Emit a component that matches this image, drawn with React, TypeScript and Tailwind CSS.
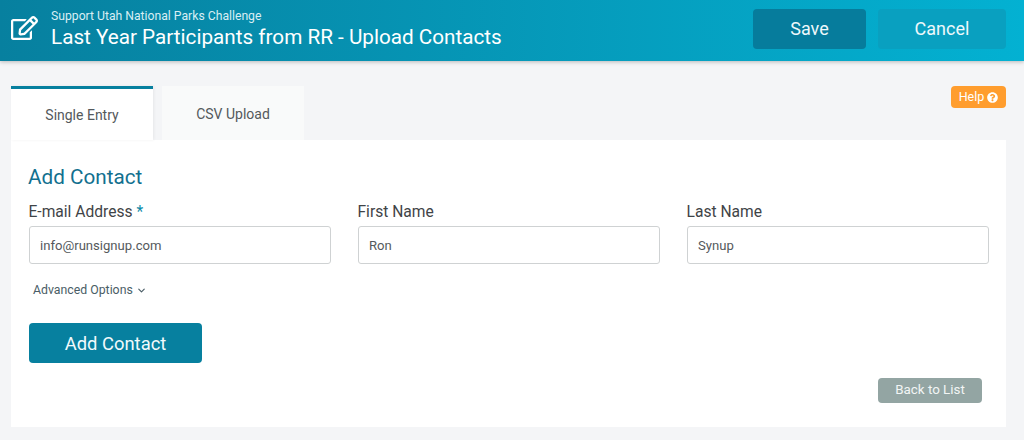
import { FaRegEdit, FaQuestionCircle } from "react-icons/fa";
import { ChevronDown } from "lucide-react";

function Field({ label, value, required }: { label: string; value: string; required?: boolean }) {
  return (
    <div className="flex flex-col">
      <label className="ml-[-0.5px] h-[24px] pt-[1px] text-[15.6px] leading-[24px] text-[#3f4447]">
        {label}
        {required && <span className="text-[#0b8aa8]"> *</span>}
      </label>
      <input
        readOnly
        value={value}
        className="mt-[3px] h-[38px] w-full rounded-[3px] border border-[#cfd2d3] bg-white px-[10px] text-[13.1px] text-[#54595c] outline-none"
      />
    </div>
  );
}

export default function App() {
  return (
    <div className="h-[440px] w-[1024px] overflow-hidden bg-[#f4f5f7] font-['Roboto',sans-serif]">
      <header className="relative z-10 flex h-[61px] items-center justify-between bg-gradient-to-r from-[#07809f] to-[#03b1d2] pb-[3px] pl-[11px] pr-[18px] shadow-[0_1px_4px_rgba(0,0,0,0.25)]">
        <div className="flex items-center">
          <FaRegEdit className="mb-[3px] h-[24px] w-[27px] text-white" />
          <div className="ml-[13px] mt-[2px] text-white">
            <div className="text-[12.2px] leading-[14px] text-[#d8eef4]">Support Utah National Parks Challenge</div>
            <div className="text-[20.7px] leading-[28px]">Last Year Participants from RR - Upload Contacts</div>
          </div>
        </div>
        <div className="flex gap-[12px]">
          <button className="h-[40px] w-[113px] rounded-[4px] bg-[#067c9c] pb-[2px] text-[18px] text-[#eef8fb]">Save</button>
          <button className="h-[40px] w-[128px] rounded-[4px] bg-[#09a0c0] pb-[2px] text-[18px] text-[#eef8fb]">Cancel</button>
        </div>
      </header>

      <main className="pl-[11px] pr-[18px] pt-[25px]">
        <div className="flex items-start justify-between">
          <div className="flex gap-[9px]">
            <div className="flex h-[54px] w-[142px] items-center justify-center border-t-[3px] border-[#07809f] bg-white pt-[1px] text-[14px] text-[#54595c] shadow-[1px_0_3px_rgba(0,0,0,0.06)]">
              Single Entry
            </div>
            <div className="flex h-[54px] w-[142px] items-center justify-center bg-[#f9fafa] pt-[2px] text-[14px] text-[#54595c]">
              CSV Upload
            </div>
          </div>
          <button className="flex h-[22px] w-[55px] items-center justify-center gap-[3px] rounded-[4px] bg-[#ff9d2e] text-[12.5px] text-white">
            Help <FaQuestionCircle className="h-[11px] w-[11px]" />
          </button>
        </div>

        <section className="h-[287px] bg-white pl-[18px] pr-[17px] pt-[24px]">
          <h2 className="ml-[-1px] text-[20.7px] leading-[26px] text-[#12708f]">Add Contact</h2>
          <div className="mt-[9px] grid grid-cols-3 gap-[27px]">
            <Field label="E-mail Address" value="info@runsignup.com" required />
            <Field label="First Name" value="Ron" />
            <Field label="Last Name" value="Synup" />
          </div>
          <div className="ml-[4px] mt-[17px] flex h-[18px] items-center gap-[3px] text-[12.3px] text-[#4a5d66]">
            Advanced Options <ChevronDown className="h-[11px] w-[11px]" strokeWidth={2.5} />
          </div>
          <button className="mt-[24px] block h-[40px] w-[173px] rounded-[4px] bg-[#07809f] pt-[1px] text-[18.4px] text-[#f2fafc]">
            Add Contact
          </button>
          <div className="mr-[7px] mt-[15px] flex justify-end">
            <button className="h-[25px] w-[104px] rounded-[4px] bg-[#93a5a3] text-[13.4px] text-[#f2f5f5]">Back to List</button>
          </div>
        </section>
      </main>
    </div>
  );
}
